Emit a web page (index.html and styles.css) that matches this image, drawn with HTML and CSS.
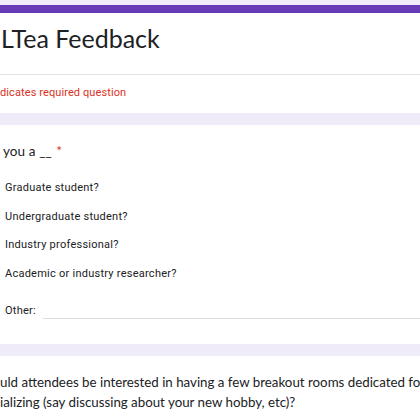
FILE: index.html
```html
<!DOCTYPE html>
<html>
<head>
<meta charset="utf-8">
<link rel="stylesheet" href="styles.css">
</head>
<body>
<div class="page">
  <section class="card header-card">
    <div class="title-area">
      <h1 class="form-title">LTea Feedback</h1>
    </div>
    <div class="req-note">dicates required question</div>
  </section>

  <section class="card question">
    <div class="q-title">you a __ <span class="star">*</span></div>
    <ul class="options">
      <li class="option">Graduate student?</li>
      <li class="option">Undergraduate student?</li>
      <li class="option">Industry professional?</li>
      <li class="option">Academic or industry researcher?</li>
      <li class="option other"><span class="other-label">Other:</span><span class="other-input"></span></li>
    </ul>
  </section>

  <section class="card question second">
    <div class="q-title long">uld attendees be interested in having a few breakout rooms dedicated fo<br>ializing (say discussing about your new hobby, etc)?</div>
  </section>
</div>
</body>
</html>
```

FILE: styles.css
```css
html, body {
  margin: 0;
  padding: 0;
  width: 420px;
  height: 420px;
  overflow: hidden;
  background: #f0ebf8;
}

.page {
  padding-top: 5px;
  display: flex;
  flex-direction: column;
  gap: 12px;
  font-family: Roboto, "Liberation Sans", sans-serif;
  color: #202124;
}

.card {
  background: #ffffff;
}

.header-card {
  border-top: 8px solid #673ab7;
}

.title-area {
  height: 62px;
  border-bottom: 1px solid #e3e3e6;
  padding-top: 10px;
  box-sizing: border-box;
}

.form-title {
  margin: 0;
  padding-left: 1px;
  font-family: Lato, "Open Sans", sans-serif;
  font-weight: 400;
  font-size: 25px;
  letter-spacing: 0;
  line-height: 30px;
  color: #202124;
}

.req-note {
  height: 38px;
  display: flex;
  align-items: center;
  padding-bottom: 4px;
  box-sizing: border-box;
  font-size: 11px;
  letter-spacing: 0.1px;
  color: #d93025;
}

.question {
  padding: 16px 0 23px 3px;
}

.q-title {
  font-family: Lato, "Open Sans", sans-serif;
  font-size: 13.5px;
  line-height: 20px;
  letter-spacing: 0.1px;
}

.star {
  color: #d93025;
  margin-left: 1px;
}

.options {
  list-style: none;
  margin: 17px 0 0;
  padding: 0 0 0 2px;
  display: flex;
  flex-direction: column;
  gap: 8.5px;
}

.option {
  font-size: 11px;
  line-height: 20px;
  letter-spacing: 0.25px;
}

.option.other {
  margin-top: 9px;
  display: flex;
  align-items: center;
  gap: 7px;
}

.other-input {
  flex: 1;
  height: 14px;
  border-bottom: 1px solid #dadce0;
}

.second {
  padding: 17px 0 20px 0;
}

.q-title.long {
  white-space: nowrap;
  font-size: 13.3px;
  line-height: 19.5px;
  letter-spacing: 0;
}
```
